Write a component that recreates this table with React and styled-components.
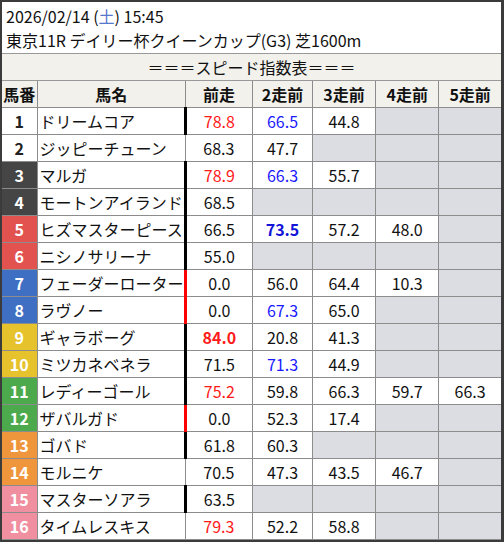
import React from "react"
import styled, { createGlobalStyle } from "styled-components"

const GlobalStyle = createGlobalStyle`
  html, body {
    margin: 0;
    padding: 0;
    background: #fff;
  }
  body {
    font-family: "Noto Sans CJK JP", "Noto Sans", sans-serif;
    color: #111;
  }
`

const waku = {
  1: { bg: "#ffffff", fg: "#222" },
  2: { bg: "#ffffff", fg: "#222" },
  3: { bg: "#454545", fg: "#fff" },
  4: { bg: "#454545", fg: "#fff" },
  5: { bg: "#e2524f", fg: "#fff" },
  6: { bg: "#e2524f", fg: "#fff" },
  7: { bg: "#3f6fc2", fg: "#fff" },
  8: { bg: "#3f6fc2", fg: "#fff" },
  9: { bg: "#e6c22c", fg: "#fff" },
  10: { bg: "#e6c22c", fg: "#fff" },
  11: { bg: "#4caa4c", fg: "#fff" },
  12: { bg: "#4caa4c", fg: "#fff" },
  13: { bg: "#ef963c", fg: "#fff" },
  14: { bg: "#ef963c", fg: "#fff" },
  15: { bg: "#ef8fa0", fg: "#fff" },
  16: { bg: "#ef8fa0", fg: "#fff" },
}

// value: [text, tone]  tone: r = red, R = bold red, b = blue, B = bold blue
const horses = [
  { no: 1, name: "ドリームコア", bar: "black", vals: [["78.8", "r"], ["66.5", "b"], ["44.8"], null, null] },
  { no: 2, name: "ジッピーチューン", bar: null, vals: [["68.3"], ["47.7"], null, null, null] },
  { no: 3, name: "マルガ", bar: "black", vals: [["78.9", "r"], ["66.3", "b"], ["55.7"], null, null] },
  { no: 4, name: "モートンアイランド", bar: "black", vals: [["68.5"], null, null, null, null] },
  { no: 5, name: "ヒズマスターピース", bar: "black", vals: [["66.5"], ["73.5", "B"], ["57.2"], ["48.0"], null] },
  { no: 6, name: "ニシノサリーナ", bar: "black", vals: [["55.0"], null, null, null, null] },
  { no: 7, name: "フェーダーローター", bar: "red", vals: [["0.0"], ["56.0"], ["64.4"], ["10.3"], null] },
  { no: 8, name: "ラヴノー", bar: "red", vals: [["0.0"], ["67.3", "b"], ["65.0"], null, null] },
  { no: 9, name: "ギャラボーグ", bar: "black", vals: [["84.0", "R"], ["20.8"], ["41.3"], null, null] },
  { no: 10, name: "ミツカネベネラ", bar: "black", vals: [["71.5"], ["71.3", "b"], ["44.9"], null, null] },
  { no: 11, name: "レディーゴール", bar: "black", vals: [["75.2", "r"], ["59.8"], ["66.3"], ["59.7"], ["66.3"]] },
  { no: 12, name: "ザバルガド", bar: "red", vals: [["0.0"], ["52.3"], ["17.4"], null, null] },
  { no: 13, name: "ゴバド", bar: "black", vals: [["61.8"], ["60.3"], null, null, null] },
  { no: 14, name: "モルニケ", bar: null, vals: [["70.5"], ["47.3"], ["43.5"], ["46.7"], null] },
  { no: 15, name: "マスターソアラ", bar: "black", vals: [["63.5"], null, null, null, null] },
  { no: 16, name: "タイムレスキス", bar: null, vals: [["79.3", "r"], ["52.2"], ["58.8"], null, null] },
]

const tones = {
  r: { color: "#ff1a1a", bold: false },
  R: { color: "#ff1a1a", bold: true },
  b: { color: "#1a1aff", bold: false },
  B: { color: "#1414d8", bold: true },
}

const Frame = styled.div`
  width: 504px;
  height: 542px;
  box-sizing: border-box;
  border-style: solid;
  border-color: #3b3b3b;
  border-width: 2px 3px 2px 2px;
  background: #fff;
  overflow: hidden;
`

const Title = styled.div`
  padding: 2px 0 1px 4px;
  font-size: 16px;
  line-height: 24px;
  white-space: nowrap;
`

const Sat = styled.span`
  color: #5577cc;
`

const Table = styled.table`
  width: 100%;
  border-collapse: collapse;
  table-layout: fixed;
  font-size: 16px;
`

const Caption = styled.td`
  height: 26px;
  padding: 0;
  text-align: center;
  background: #f2f1ec;
  border: 1px solid #999;
  border-left: none;
  border-right: none;
  white-space: nowrap;
`

const Head = styled.th`
  height: 26px;
  padding: 0;
  background: #f2f1ec;
  border: 1px solid #8c8c8c;
  font-weight: 700;
  text-align: center;
  white-space: nowrap;
  &:first-child {
    border-left: none;
  }
  &:last-child {
    border-right: none;
  }
`

const Cell = styled.td`
  height: 26px;
  padding: 0;
  border: 1px solid #8c8c8c;
  text-align: center;
  white-space: nowrap;
  overflow: hidden;
  background: ${(p) => (p.$empty ? "#dcdde2" : "#fff")};
  color: ${(p) => p.$color || "#111"};
  font-weight: ${(p) => (p.$bold ? 700 : 400)};
  ${(p) => p.$bar && `border-left: 3px solid ${p.$bar === "red" ? "#ff0000" : "#000"};`}
  &:last-child {
    border-right: none;
  }
`

const NumCell = styled(Cell)`
  border-left: none;
  font-weight: 700;
`

const NameCell = styled(Cell)`
  text-align: left;
  padding-left: 2px;
  overflow: visible;
`

const heads = ["馬番", "馬名", "前走", "2走前", "3走前", "4走前", "5走前"]
const widths = [35, 148, 67, 60, 63, 63, 62]

export default function App() {
  return (
    <>
      <GlobalStyle />
      <Frame>
        <Title>
          <div>
            2026/02/14 (<Sat>土</Sat>) 15:45
          </div>
          <div>東京11R デイリー杯クイーンカップ(G3) 芝1600m</div>
        </Title>
        <Table>
          <colgroup>
            {widths.map((w, i) => (
              <col key={i} style={{ width: w }} />
            ))}
          </colgroup>
          <tbody>
            <tr>
              <Caption colSpan={7}>＝＝＝スピード指数表＝＝＝</Caption>
            </tr>
            <tr>
              {heads.map((h) => (
                <Head key={h}>{h}</Head>
              ))}
            </tr>
            {horses.map((h) => (
              <tr key={h.no}>
                <NumCell $empty={false} style={{ background: waku[h.no].bg }} $color={waku[h.no].fg}>
                  {h.no}
                </NumCell>
                <NameCell>{h.name}</NameCell>
                {h.vals.map((v, i) => {
                  const tone = v && v[1] ? tones[v[1]] : null
                  return (
                    <Cell
                      key={i}
                      $empty={!v}
                      $color={tone ? tone.color : undefined}
                      $bold={tone ? tone.bold : false}
                      $bar={i === 0 ? h.bar : null}
                    >
                      {v ? v[0] : ""}
                    </Cell>
                  )
                })}
              </tr>
            ))}
          </tbody>
        </Table>
      </Frame>
    </>
  )
}
